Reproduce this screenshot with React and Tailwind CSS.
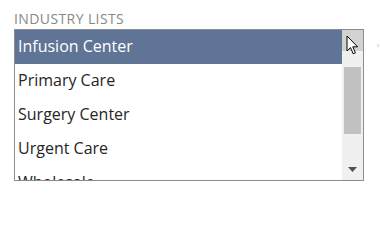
import React from "react";

const items = ["Infusion Center", "Primary Care", "Surgery Center", "Urgent Care", "Wholesale"];

export default function App() {
  return (
    <div className="w-[380px] h-[213px] bg-white relative overflow-hidden" style={{ fontFamily: '"Open Sans", sans-serif' }}>
      <div className="pl-[14px] pt-[11px]">
        <div className="text-[14px] leading-[16px] text-[#878787] tracking-[0.4px]">INDUSTRY LISTS</div>
        <div className="mt-[2px] w-[350px] h-[152px] border border-[#8d8d8d] flex overflow-hidden">
          <div className="flex-1 flex flex-col overflow-hidden">
            {items.map((it, i) => (
              <div
                key={it}
                className={
                  i === 0
                    ? "h-[34px] shrink-0 leading-[32px] pl-[3px] text-[16px] bg-[#607596] text-white"
                    : "h-[34px] shrink-0 leading-[32px] pl-[3px] text-[16px] text-[#262626]"
                }
              >
                {it}
              </div>
            ))}
          </div>
          <div className="w-[21px] bg-[#f0f0f0] flex flex-col">
            <div className="h-[21px] bg-[#d2d2d2]" />
            <div className="h-[16px]" />
            <div className="mx-[2px] h-[67px] bg-[#c1c1c1]" />
            <div className="flex-1" />
            <div className="h-[21px] flex items-center justify-center">
              <svg width="9" height="5" viewBox="0 0 9 5">
                <path d="M0 0 H9 L4.5 5 Z" fill="#505050" />
              </svg>
            </div>
          </div>
        </div>
      </div>
      <svg className="absolute left-[346px] top-[35px]" width="14" height="21" viewBox="0 0 14 21">
        <path d="M1 1 L1 16 L4.5 12.6 L7.2 18.8 L9.4 17.9 L6.8 11.8 L11.6 11.8 Z" fill="white" stroke="black" strokeWidth="1" strokeLinejoin="miter" />
      </svg>
      <div className="absolute left-[377px] top-[44px] w-[2px] h-[3px] bg-[#e4e4e4]" />
    </div>
  );
}
